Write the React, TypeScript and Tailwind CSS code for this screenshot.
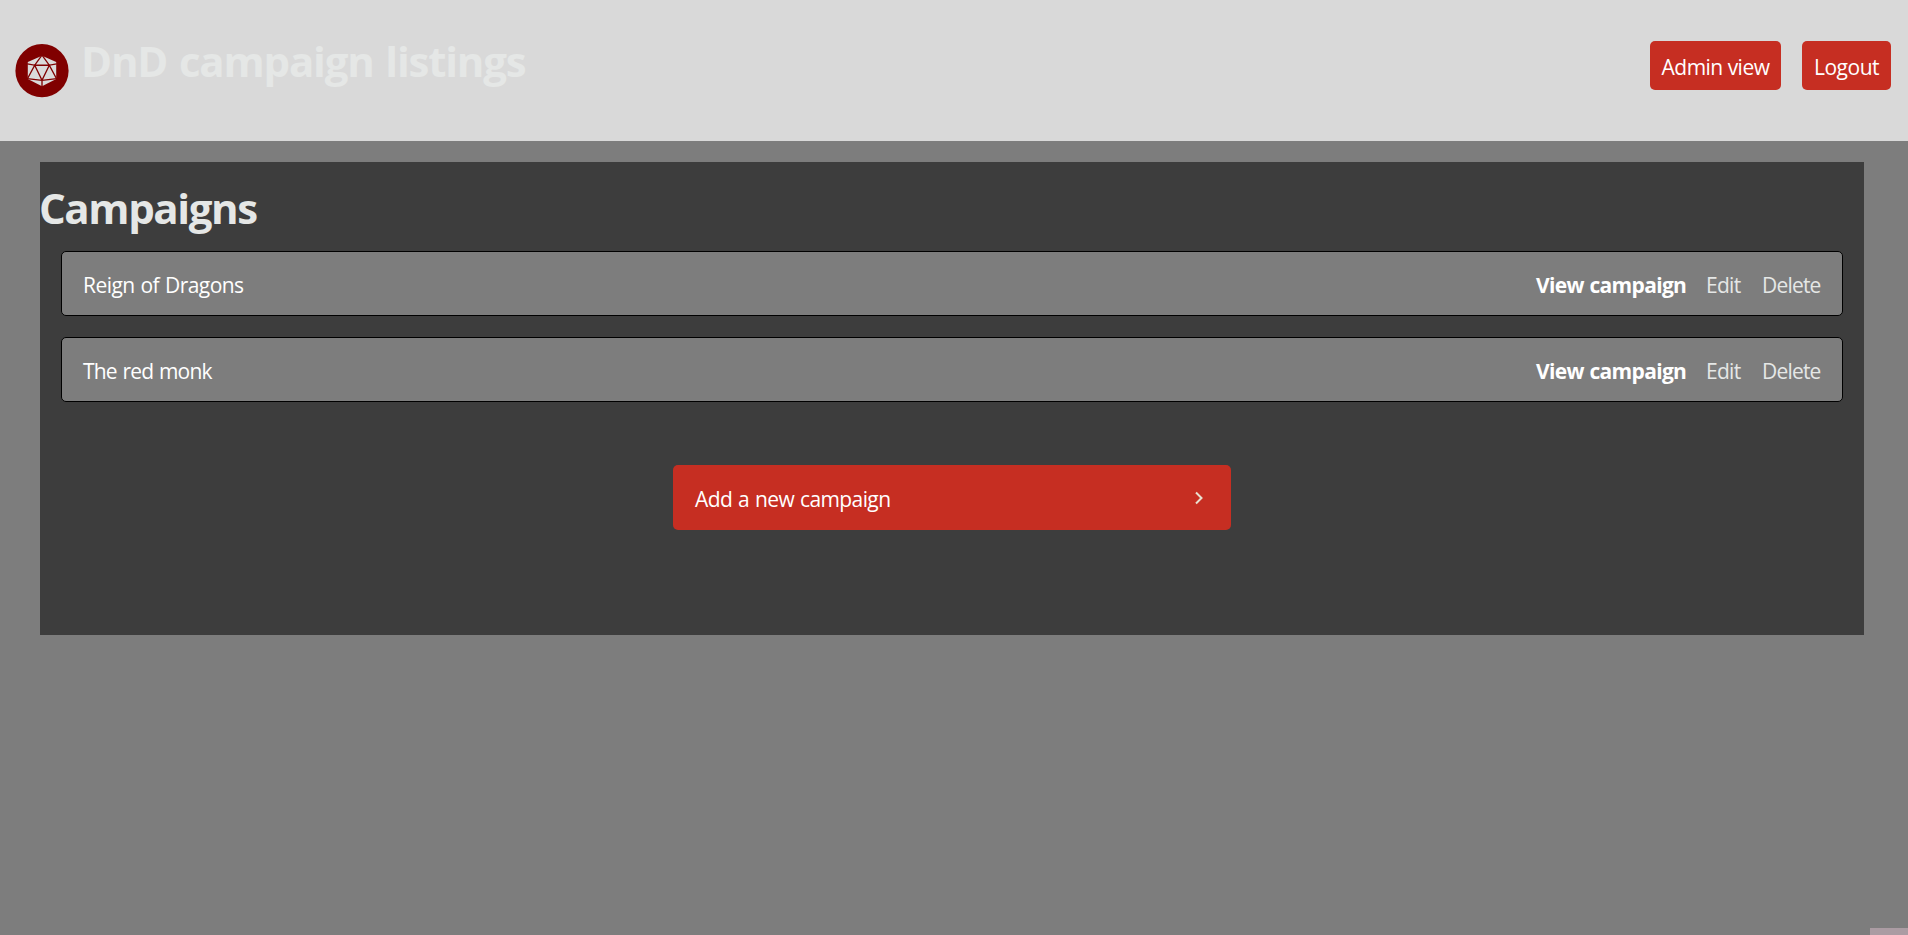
function Logo() {
  return (
    <svg viewBox="0 0 54 54" className="block h-[54px] w-[54px]" aria-hidden="true">
      <circle cx="27" cy="26.7" r="26.6" fill="#800000" />
      <path d="M27 11.8 41.2 18V35.1L27 42.2 12.8 35.1V18Z" fill="#dadada" />
      <path
        d="M27 11.2 19.7 21.2H34.3L27 11.2M12.3 19.9 19.7 21.2 12.3 35M41.7 19.9 34.3 21.2 41.7 35M19.7 21.2 27 36.2 34.3 21.2M12.3 34.6 27 36.4 41.7 34.6M27 36V42.8"
        fill="none"
        stroke="#800000"
        strokeWidth="1.35"
      />
    </svg>
  );
}

const campaigns = [
  { name: "Reign of Dragons", tracking: "tracking-[-0.55px]" },
  { name: "The red monk", tracking: "tracking-[-0.8px]" },
];

export default function App() {
  return (
    <div className="flex h-[935px] w-full flex-col overflow-hidden bg-[#7d7d7d] font-['Open_Sans','Noto_Sans',sans-serif] text-[21px] leading-[28px] text-white [word-spacing:1px]">
      <header className="flex h-[141px] shrink-0 items-start bg-[#d9d9d9] pr-[17px] pl-[15px]">
        <div className="mt-[44px]">
          <Logo />
        </div>
        <h1 className="mt-[33px] ml-[12px] text-[42px] leading-[56px] font-bold tracking-[-1.2px] whitespace-nowrap text-[#e5e7e6] [word-spacing:2px]">
          DnD campaign listings
        </h1>
        <nav className="mt-[41px] ml-auto flex gap-[21px]">
          <button className="h-[49px] w-[131px] rounded-[5px] bg-[#c62e22] pt-[3px] tracking-[-0.52px] whitespace-nowrap">
            Admin view
          </button>
          <button className="h-[49px] w-[89px] rounded-[5px] bg-[#c62e22] pt-[3px] tracking-[-0.5px] whitespace-nowrap">
            Logout
          </button>
        </nav>
      </header>

      <main className="mt-[21px] mr-[44px] ml-[40px] h-[473px] shrink-0 bg-[#3d3d3d]">
        <h2 className="-ml-px h-[89px] pt-[18px] text-[42px] leading-[56px] font-bold tracking-[-1.4px] text-[#e5e7e6]">
          Campaigns
        </h2>
        <ul className="mx-[21px] flex flex-col gap-[21px]">
          {campaigns.map(({ name, tracking }) => (
            <li
              key={name}
              className="flex h-[65px] items-center justify-between rounded-[5px] border border-black bg-[#7d7d7d] pt-[3px] pr-[20px] pl-[21px] whitespace-nowrap"
            >
              <span className={tracking}>{name}</span>
              <span className="flex gap-[21px] text-[#e5e7e6]">
                <a className="w-[149px] font-bold tracking-[-0.68px] text-white">View campaign</a>
                <a className="w-[35px] tracking-[-0.7px]">Edit</a>
                <a className="w-[60px] tracking-[-0.8px]">Delete</a>
              </span>
            </li>
          ))}
        </ul>
        <button className="mt-[63px] ml-[633px] flex h-[65px] w-[558px] items-center justify-between rounded-[5px] bg-[#c62e22] pr-[27px] pl-[22px]">
          <span className="pt-[3px] tracking-[-0.6px] [word-spacing:1px]">Add a new campaign</span>
          <svg viewBox="0 0 10 14" className="h-[14px] w-[10px]" fill="none" stroke="#e8e0d0" strokeWidth="2">
            <path d="M2 1.5 7.5 7 2 12.5" />
          </svg>
        </button>
      </main>

      <div className="mt-auto ml-auto h-[7px] w-[38px] bg-[#ab9ca3]" />
    </div>
  );
}
